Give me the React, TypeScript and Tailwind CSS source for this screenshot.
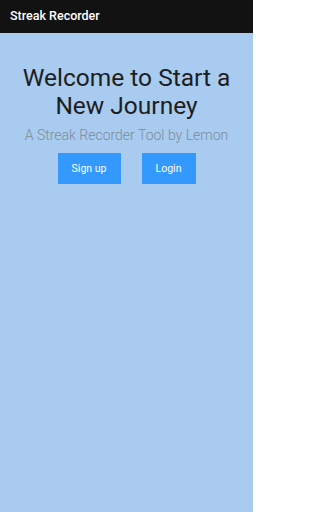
export default function App() {
  return (
    <div className="flex h-[512px] w-[253px] flex-col bg-[#a8cbef] font-['Roboto',sans-serif]">
      {/* App bar */}
      <header className="flex h-[33px] items-center bg-[#121212] px-[10px]">
        <span className="text-[12.5px] font-medium text-white">Streak Recorder</span>
      </header>

      {/* Welcome */}
      <main className="flex flex-col items-center pt-[31px]">
        <h1 className="text-center text-[24.5px] leading-[28px] text-[#1e1e1e]">
          Welcome to Start a
          <br />
          New Journey
        </h1>
        <p className="mt-[6px] text-[14px] font-light leading-[18px] text-[#7d8b9a]">
          A Streak Recorder Tool by Lemon
        </p>
        <div className="mt-[9px] flex gap-[21px]">
          <button className="h-[31px] w-[63px] bg-[#3399ff] text-[10.5px] text-white">Sign up</button>
          <button className="h-[31px] w-[54px] bg-[#3399ff] text-[10.5px] text-white">Login</button>
        </div>
      </main>
    </div>
  );
}
